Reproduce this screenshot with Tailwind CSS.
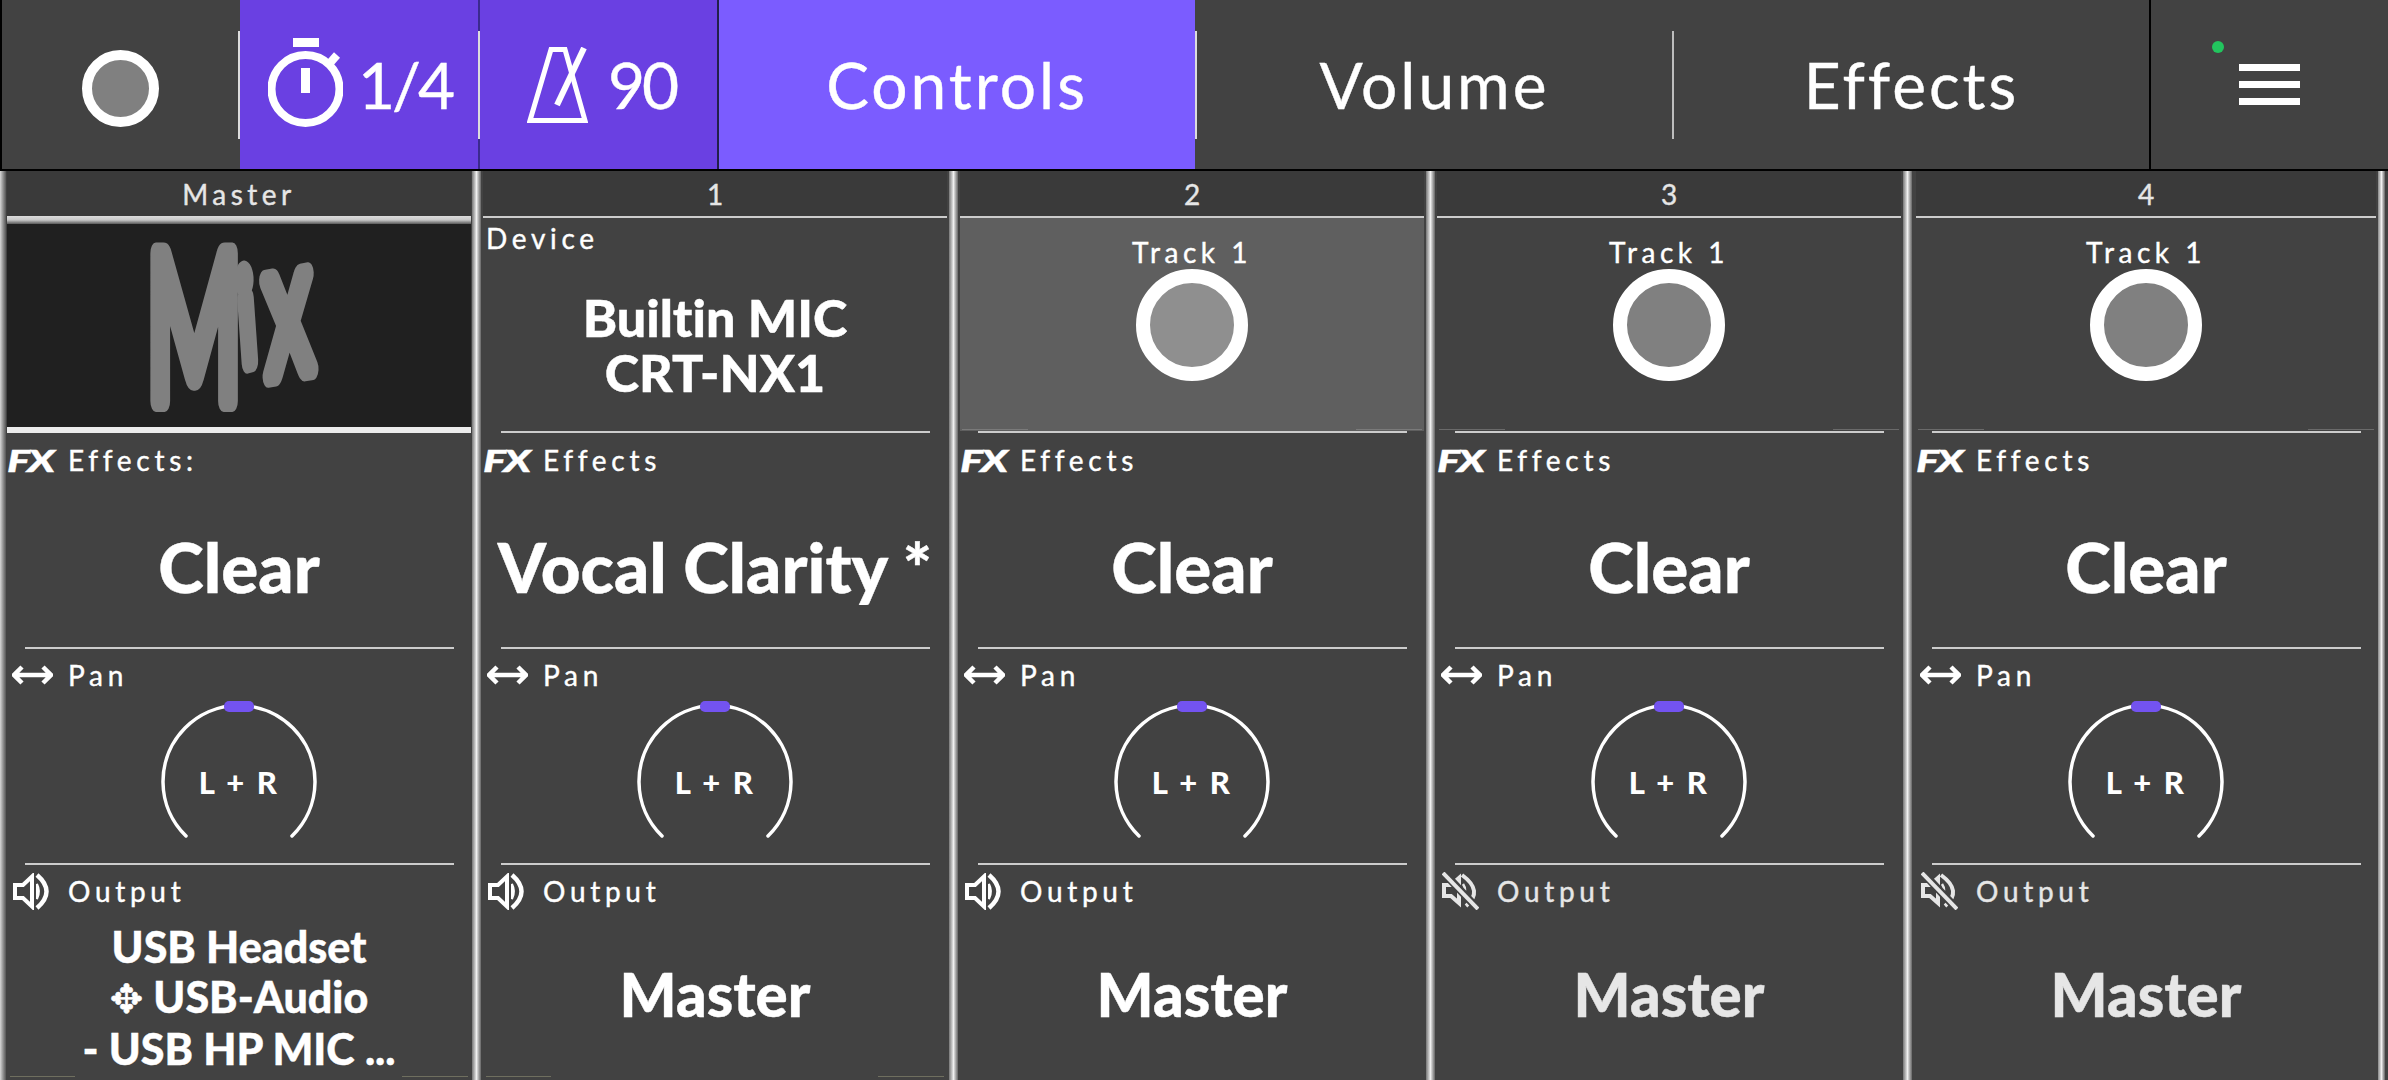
<!DOCTYPE html>
<html lang="en">
<head>
    <meta charset="UTF-8">
    <title>Mixer</title>
    <script src="https://cdn.jsdelivr.net/npm/@tailwindcss/browser@4"></script>
</head>
<body class="w-[2388px] h-[1080px] overflow-hidden bg-[#424242] text-white [font-family:Lato,'DejaVu_Sans',sans-serif] [font-variant-ligatures:none] [-webkit-text-stroke:0.4px]">

    <svg class="hidden">
        <symbol id="arrows" viewBox="0 0 41 20">
            <path d="M2 10H39M10 2L2 10L10 18M31 2L39 10L31 18" fill="none" stroke="white" stroke-width="4.500"/>
        </symbol>
        <symbol id="speaker" viewBox="0 0 39 37">
            <path d="M2 12H10L19 3.500V33.500L10 25H2Z" fill="none" stroke="white" stroke-width="4"/>
            <path d="M24 11Q28 18.500 24 26Z" fill="white" stroke="white" stroke-width="2"/>
            <path d="M24 2Q43 18.500 24 35" fill="none" stroke="white" stroke-width="4.500"/>
        </symbol>
        <symbol id="muted" viewBox="0 0 37 38">
            <path d="M2 13H9L17 6V31L9 24H2Z" fill="none" stroke="#e6e6e6" stroke-width="4"/>
            <path d="M20 3Q42 19 24 34" fill="none" stroke="#e6e6e6" stroke-width="4"/>
            <path d="M21 12Q25 18 21 24" fill="none" stroke="#e6e6e6" stroke-width="2.500"/>
            <path d="M2 1L36 37" stroke="#424242" stroke-width="8"/>
            <path d="M1 1L36 37" stroke="#e6e6e6" stroke-width="4"/>
        </symbol>
    </svg>

    <!-- top bar -->
    <div class="flex h-[171px] border-b-2 border-l-2 border-black">
        <div class="w-[236px] flex items-center justify-center pt-[7px]">
            <div class="w-[77px] h-[77px] rounded-full border-[10px] border-white bg-[#808080]"></div>
        </div>
        <div class="w-[2px] self-center h-[108px] bg-[#dcdcdc]"></div>

        <div class="w-[238px] bg-[#6a40e2] flex items-center pl-[28px] gap-[15px]">
            <svg class="w-[75px] h-[89px] mt-[-4px]" viewBox="0 0 75 89">
                <circle cx="37.500" cy="51" r="34" fill="none" stroke="white" stroke-width="8"/>
                <rect x="25" y="0" width="26" height="9" fill="white"/>
                <rect x="33" y="30" width="9" height="25" fill="white"/>
                <path d="M62 25L69 17" stroke="white" stroke-width="8"/>
            </svg>
            <span class="text-[64px] leading-none tracking-[-3px]">1/4</span>
        </div>
        <div class="w-[2px] bg-[#3b2a8e] flex items-center"><div class="w-[2px] h-[108px] bg-[#dcdcdc]"></div></div>

        <div class="w-[237px] bg-[#6a40e2] flex items-center pl-[47px] gap-[20px]">
            <svg class="w-[61px] h-[76px]" viewBox="0 0 61 76">
                <path d="M24 2.500H38L58 73.500H3Z" fill="none" stroke="white" stroke-width="5"/>
                <path d="M30 58L57 1" stroke="white" stroke-width="6"/>
            </svg>
            <span class="text-[64px] leading-none tracking-[-3px]">90</span>
        </div>
        <div class="w-[2px] bg-[#22204a]"></div>

        <div class="w-[476px] bg-[#7b5cff] flex items-center justify-center text-[64px] tracking-[3px]">Controls</div>
        <div class="w-[2px] self-center h-[108px] bg-[#dcdcdc]"></div>
        <div class="w-[475px] flex items-center justify-center text-[64px] tracking-[3px]">Volume</div>
        <div class="w-[2px] self-center h-[108px] bg-[#bdbdbd]"></div>
        <div class="w-[475px] flex items-center justify-center text-[64px] tracking-[3px]">Effects</div>
        <div class="w-[2px] bg-black"></div>

        <div class="relative flex-1 flex flex-col items-center justify-center gap-[10px]">
            <div class="absolute left-[61px] top-[41px] w-[12px] h-[12px] rounded-full bg-[#22c55e]"></div>
            <div class="w-[61px] h-[7px] bg-white"></div>
            <div class="w-[61px] h-[7px] bg-white"></div>
            <div class="w-[61px] h-[7px] bg-white"></div>
        </div>
    </div>

    <!-- channel strips -->
    <div class="flex h-[909px]">
        <div class="w-[6px] bg-linear-to-r from-[#d8d8d8] to-[#555555]"></div>

        <!-- master -->
        <div class="w-[466px] flex flex-col px-px">
            <div class="h-[45px] shrink-0 bg-[#3a3a3a] flex items-center justify-center text-[28px] leading-none tracking-[4.500px] text-[#e6e6e6]">Master</div>
            <div class="h-[8px] shrink-0 bg-linear-to-b from-[#dcdcdc] via-[#c8c8c8] to-[#5a5a5a]"></div>
            <div class="h-[203px] shrink-0 bg-[#202020] flex items-center justify-center">
                <svg class="w-[190px] h-[185px] overflow-visible" viewBox="0 0 190 185">
                    <g transform="scale(0.5 1)">
                        <text fill="#808080" stroke="#808080" stroke-width="22" stroke-linejoin="round" font-family="Lato" font-weight="400" font-size="205" x="5" y="168">M<tspan x="197" y="131" font-size="125" rotate="-8">i</tspan><tspan x="246" y="144" font-size="190" rotate="-5">x</tspan></text>
                    </g>
                </svg>
            </div>
            <div class="h-[6px] shrink-0 bg-[#ececec]"></div>

            <div class="h-[214px] shrink-0 flex flex-col">
                <div class="mt-[10px] h-[34px] flex items-center"><span class="w-[61px] text-[31px] leading-none font-black italic tracking-[-2px] scale-x-[1.4] origin-left">FX</span><span class="text-[28px] leading-none tracking-[4.700px]">Effects:</span></div>
                <div class="flex-1 flex items-center justify-center pt-[9px] text-[69px] font-black">Clear</div>
            </div>
            <div class="h-[2px] w-[429px] mx-auto shrink-0 bg-[#cccccc]"></div>

            <div class="h-[214px] shrink-0 flex flex-col">
                <div class="mt-[9px] h-[34px] flex items-center"><svg class="w-[41px] h-[20px] ml-[5px] mr-[15px]"><use href="#arrows"/></svg><span class="text-[28px] leading-none tracking-[4.700px]">Pan</span></div>
                <svg class="w-[156px] h-[140px] mx-auto mt-[7px]" viewBox="0 0 156 140">
                    <path d="M25 137A76 76 0 1 1 131 137" fill="none" stroke="white" stroke-width="3.500" stroke-linecap="round"/>
                    <rect x="63" y="2" width="30" height="11" rx="5" fill="#7353f0"/>
                    <text x="78" y="95" text-anchor="middle" fill="white" font-size="31" font-weight="900" font-family="Lato" letter-spacing="2.500">L + R</text>
                </svg>
            </div>
            <div class="h-[2px] w-[429px] mx-auto shrink-0 bg-[#cccccc]"></div>

            <div class="relative flex-1 flex flex-col">
                <div class="mt-[9px] h-[34px] flex items-center"><svg class="w-[39px] h-[37px] ml-[6px] mr-[16px]"><use href="#speaker"/></svg><span class="text-[28px] leading-none tracking-[4.700px]">Output</span></div>
                <div class="mt-[14px] text-center text-[43px] leading-[50px] font-black whitespace-nowrap">USB Headset<br><span class="[font-family:'DejaVu_Sans'] text-[40px]">✥</span> USB-Audio<br>- USB HP MIC ...</div>
                <div class="absolute left-[3px] right-[3px] bottom-[3px] flex justify-between">
                    <div class="w-[65px] h-px bg-[#6f6f5f]"></div>
                    <div class="w-[66px] h-px bg-[#6f6f5f]"></div>
                </div>
            </div>
        </div>

        <div class="w-[9px] bg-linear-to-r from-[#777777] via-[#f0f0f0] to-[#666666]"></div>

        <!-- strip 1 -->
        <div class="w-[468px] flex flex-col px-[2px]">
            <div class="h-[45px] shrink-0 bg-[#3a3a3a] flex items-center justify-center text-[28px] leading-none text-[#e6e6e6]">1</div>
            <div class="h-[2px] shrink-0 bg-[#cccccc]"></div>
            <div class="h-[213px] shrink-0 flex flex-col">
                <div class="h-[34px] mt-[3px] ml-[3px] flex items-center text-[28px] leading-none tracking-[4.700px]">Device</div>
                <div class="mt-[35px] text-center text-[52px] leading-[55px] font-black">Builtin MIC<br>CRT-NX1</div>
            </div>
            <div class="h-[2px] w-[429px] mx-auto shrink-0 bg-[#cccccc]"></div>

            <div class="h-[214px] shrink-0 flex flex-col">
                <div class="mt-[10px] h-[34px] flex items-center"><span class="w-[60px] text-[31px] leading-none font-black italic tracking-[-2px] scale-x-[1.4] origin-left">FX</span><span class="text-[28px] leading-none tracking-[4.700px]">Effects</span></div>
                <div class="flex-1 flex items-center justify-center pt-[9px] text-[69px] font-black whitespace-nowrap">Vocal Clarity *</div>
            </div>
            <div class="h-[2px] w-[429px] mx-auto shrink-0 bg-[#cccccc]"></div>

            <div class="h-[214px] shrink-0 flex flex-col">
                <div class="mt-[9px] h-[34px] flex items-center"><svg class="w-[41px] h-[20px] ml-[4px] mr-[15px]"><use href="#arrows"/></svg><span class="text-[28px] leading-none tracking-[4.700px]">Pan</span></div>
                <svg class="w-[156px] h-[140px] mx-auto mt-[7px]" viewBox="0 0 156 140">
                    <path d="M25 137A76 76 0 1 1 131 137" fill="none" stroke="white" stroke-width="3.500" stroke-linecap="round"/>
                    <rect x="63" y="2" width="30" height="11" rx="5" fill="#7353f0"/>
                    <text x="78" y="95" text-anchor="middle" fill="white" font-size="31" font-weight="900" font-family="Lato" letter-spacing="2.500">L + R</text>
                </svg>
            </div>
            <div class="h-[2px] w-[429px] mx-auto shrink-0 bg-[#cccccc]"></div>

            <div class="relative flex-1 flex flex-col">
                <div class="mt-[9px] h-[34px] flex items-center"><svg class="w-[39px] h-[37px] ml-[5px] mr-[16px]"><use href="#speaker"/></svg><span class="text-[28px] leading-none tracking-[4.700px]">Output</span></div>
                <div class="mt-[56px] text-center text-[60px] leading-none font-black">Master</div>
                <div class="absolute left-[3px] right-[3px] bottom-[3px] flex justify-between">
                    <div class="w-[65px] h-px bg-[#6f6f5f]"></div>
                    <div class="w-[66px] h-px bg-[#6f6f5f]"></div>
                </div>
            </div>
        </div>

        <div class="w-[9px] bg-linear-to-r from-[#777777] via-[#f0f0f0] to-[#666666]"></div>

        <!-- strip 2 (selected) -->
        <div class="w-[468px] flex flex-col px-[2px]">
            <div class="h-[45px] shrink-0 bg-[#3a3a3a] flex items-center justify-center text-[28px] leading-none text-[#e6e6e6]">2</div>
            <div class="h-[2px] shrink-0 bg-[#cccccc]"></div>
            <div class="relative h-[213px] shrink-0 bg-[#5f5f5f] flex flex-col items-center">
                <div class="h-[34px] mt-[17px] flex items-center text-[28px] leading-none tracking-[4.500px]">Track 1</div>
                <div class="w-[112px] h-[112px] rounded-full border-[14px] border-white bg-[#8f8f8f]"></div>
                <div class="absolute left-[2px] right-[2px] bottom-[1px] flex justify-between">
                    <div class="w-[66px] h-px bg-[#7a7a7a]"></div>
                    <div class="w-[66px] h-px bg-[#7a7a7a]"></div>
                </div>
            </div>
            <div class="h-[2px] w-[429px] mx-auto shrink-0 bg-[#cccccc]"></div>

            <div class="h-[214px] shrink-0 flex flex-col">
                <div class="mt-[10px] h-[34px] flex items-center"><span class="w-[60px] text-[31px] leading-none font-black italic tracking-[-2px] scale-x-[1.4] origin-left">FX</span><span class="text-[28px] leading-none tracking-[4.700px]">Effects</span></div>
                <div class="flex-1 flex items-center justify-center pt-[9px] text-[69px] font-black">Clear</div>
            </div>
            <div class="h-[2px] w-[429px] mx-auto shrink-0 bg-[#cccccc]"></div>

            <div class="h-[214px] shrink-0 flex flex-col">
                <div class="mt-[9px] h-[34px] flex items-center"><svg class="w-[41px] h-[20px] ml-[4px] mr-[15px]"><use href="#arrows"/></svg><span class="text-[28px] leading-none tracking-[4.700px]">Pan</span></div>
                <svg class="w-[156px] h-[140px] mx-auto mt-[7px]" viewBox="0 0 156 140">
                    <path d="M25 137A76 76 0 1 1 131 137" fill="none" stroke="white" stroke-width="3.500" stroke-linecap="round"/>
                    <rect x="63" y="2" width="30" height="11" rx="5" fill="#7353f0"/>
                    <text x="78" y="95" text-anchor="middle" fill="white" font-size="31" font-weight="900" font-family="Lato" letter-spacing="2.500">L + R</text>
                </svg>
            </div>
            <div class="h-[2px] w-[429px] mx-auto shrink-0 bg-[#cccccc]"></div>

            <div class="flex-1 flex flex-col">
                <div class="mt-[9px] h-[34px] flex items-center"><svg class="w-[39px] h-[37px] ml-[5px] mr-[16px]"><use href="#speaker"/></svg><span class="text-[28px] leading-none tracking-[4.700px]">Output</span></div>
                <div class="mt-[56px] text-center text-[60px] leading-none font-black">Master</div>
            </div>
        </div>

        <div class="w-[9px] bg-linear-to-r from-[#777777] via-[#f0f0f0] to-[#666666]"></div>

        <!-- strip 3 -->
        <div class="w-[468px] flex flex-col px-[2px]">
            <div class="h-[45px] shrink-0 bg-[#3a3a3a] flex items-center justify-center text-[28px] leading-none text-[#e6e6e6]">3</div>
            <div class="h-[2px] shrink-0 bg-[#cccccc]"></div>
            <div class="relative h-[213px] shrink-0 flex flex-col items-center">
                <div class="h-[34px] mt-[17px] flex items-center text-[28px] leading-none tracking-[4.500px]">Track 1</div>
                <div class="w-[112px] h-[112px] rounded-full border-[14px] border-white bg-[#808080]"></div>
                <div class="absolute left-[2px] right-[2px] bottom-[1px] flex justify-between">
                    <div class="w-[66px] h-px bg-[#6a6a6a]"></div>
                    <div class="w-[66px] h-px bg-[#6a6a6a]"></div>
                </div>
            </div>
            <div class="h-[2px] w-[429px] mx-auto shrink-0 bg-[#cccccc]"></div>

            <div class="h-[214px] shrink-0 flex flex-col">
                <div class="mt-[10px] h-[34px] flex items-center"><span class="w-[60px] text-[31px] leading-none font-black italic tracking-[-2px] scale-x-[1.4] origin-left">FX</span><span class="text-[28px] leading-none tracking-[4.700px]">Effects</span></div>
                <div class="flex-1 flex items-center justify-center pt-[9px] text-[69px] font-black">Clear</div>
            </div>
            <div class="h-[2px] w-[429px] mx-auto shrink-0 bg-[#cccccc]"></div>

            <div class="h-[214px] shrink-0 flex flex-col">
                <div class="mt-[9px] h-[34px] flex items-center"><svg class="w-[41px] h-[20px] ml-[4px] mr-[15px]"><use href="#arrows"/></svg><span class="text-[28px] leading-none tracking-[4.700px]">Pan</span></div>
                <svg class="w-[156px] h-[140px] mx-auto mt-[7px]" viewBox="0 0 156 140">
                    <path d="M25 137A76 76 0 1 1 131 137" fill="none" stroke="white" stroke-width="3.500" stroke-linecap="round"/>
                    <rect x="63" y="2" width="30" height="11" rx="5" fill="#7353f0"/>
                    <text x="78" y="95" text-anchor="middle" fill="white" font-size="31" font-weight="900" font-family="Lato" letter-spacing="2.500">L + R</text>
                </svg>
            </div>
            <div class="h-[2px] w-[429px] mx-auto shrink-0 bg-[#cccccc]"></div>

            <div class="flex-1 flex flex-col text-[#e6e6e6]">
                <div class="mt-[9px] h-[34px] flex items-center"><svg class="w-[37px] h-[38px] ml-[5px] mr-[18px]"><use href="#muted"/></svg><span class="text-[28px] leading-none tracking-[4.700px]">Output</span></div>
                <div class="mt-[56px] text-center text-[60px] leading-none font-black">Master</div>
            </div>
        </div>

        <div class="w-[9px] bg-linear-to-r from-[#777777] via-[#f0f0f0] to-[#666666]"></div>

        <!-- strip 4 -->
        <div class="w-[466px] flex flex-col pl-[4px] pr-[2px]">
            <div class="h-[45px] shrink-0 bg-[#3a3a3a] flex items-center justify-center text-[28px] leading-none text-[#e6e6e6]">4</div>
            <div class="h-[2px] shrink-0 bg-[#cccccc]"></div>
            <div class="relative h-[213px] shrink-0 flex flex-col items-center">
                <div class="h-[34px] mt-[17px] flex items-center text-[28px] leading-none tracking-[4.500px]">Track 1</div>
                <div class="w-[112px] h-[112px] rounded-full border-[14px] border-white bg-[#808080]"></div>
                <div class="absolute left-[2px] right-[2px] bottom-[1px] flex justify-between">
                    <div class="w-[66px] h-px bg-[#6a6a6a]"></div>
                    <div class="w-[66px] h-px bg-[#6a6a6a]"></div>
                </div>
            </div>
            <div class="h-[2px] w-[429px] mx-auto shrink-0 bg-[#cccccc]"></div>

            <div class="h-[214px] shrink-0 flex flex-col">
                <div class="mt-[10px] h-[34px] flex items-center"><span class="w-[60px] text-[31px] leading-none font-black italic tracking-[-2px] scale-x-[1.4] origin-left">FX</span><span class="text-[28px] leading-none tracking-[4.700px]">Effects</span></div>
                <div class="flex-1 flex items-center justify-center pt-[9px] text-[69px] font-black">Clear</div>
            </div>
            <div class="h-[2px] w-[429px] mx-auto shrink-0 bg-[#cccccc]"></div>

            <div class="h-[214px] shrink-0 flex flex-col">
                <div class="mt-[9px] h-[34px] flex items-center"><svg class="w-[41px] h-[20px] ml-[4px] mr-[15px]"><use href="#arrows"/></svg><span class="text-[28px] leading-none tracking-[4.700px]">Pan</span></div>
                <svg class="w-[156px] h-[140px] mx-auto mt-[7px]" viewBox="0 0 156 140">
                    <path d="M25 137A76 76 0 1 1 131 137" fill="none" stroke="white" stroke-width="3.500" stroke-linecap="round"/>
                    <rect x="63" y="2" width="30" height="11" rx="5" fill="#7353f0"/>
                    <text x="78" y="95" text-anchor="middle" fill="white" font-size="31" font-weight="900" font-family="Lato" letter-spacing="2.500">L + R</text>
                </svg>
            </div>
            <div class="h-[2px] w-[429px] mx-auto shrink-0 bg-[#cccccc]"></div>

            <div class="flex-1 flex flex-col text-[#e6e6e6]">
                <div class="mt-[9px] h-[34px] flex items-center"><svg class="w-[37px] h-[38px] ml-[5px] mr-[18px]"><use href="#muted"/></svg><span class="text-[28px] leading-none tracking-[4.700px]">Output</span></div>
                <div class="mt-[56px] text-center text-[60px] leading-none font-black">Master</div>
            </div>
        </div>

        <div class="w-[7px] bg-linear-to-r from-[#888888] via-[#f0f0f0] to-[#666666]"></div>
    </div>

</body>
</html>
